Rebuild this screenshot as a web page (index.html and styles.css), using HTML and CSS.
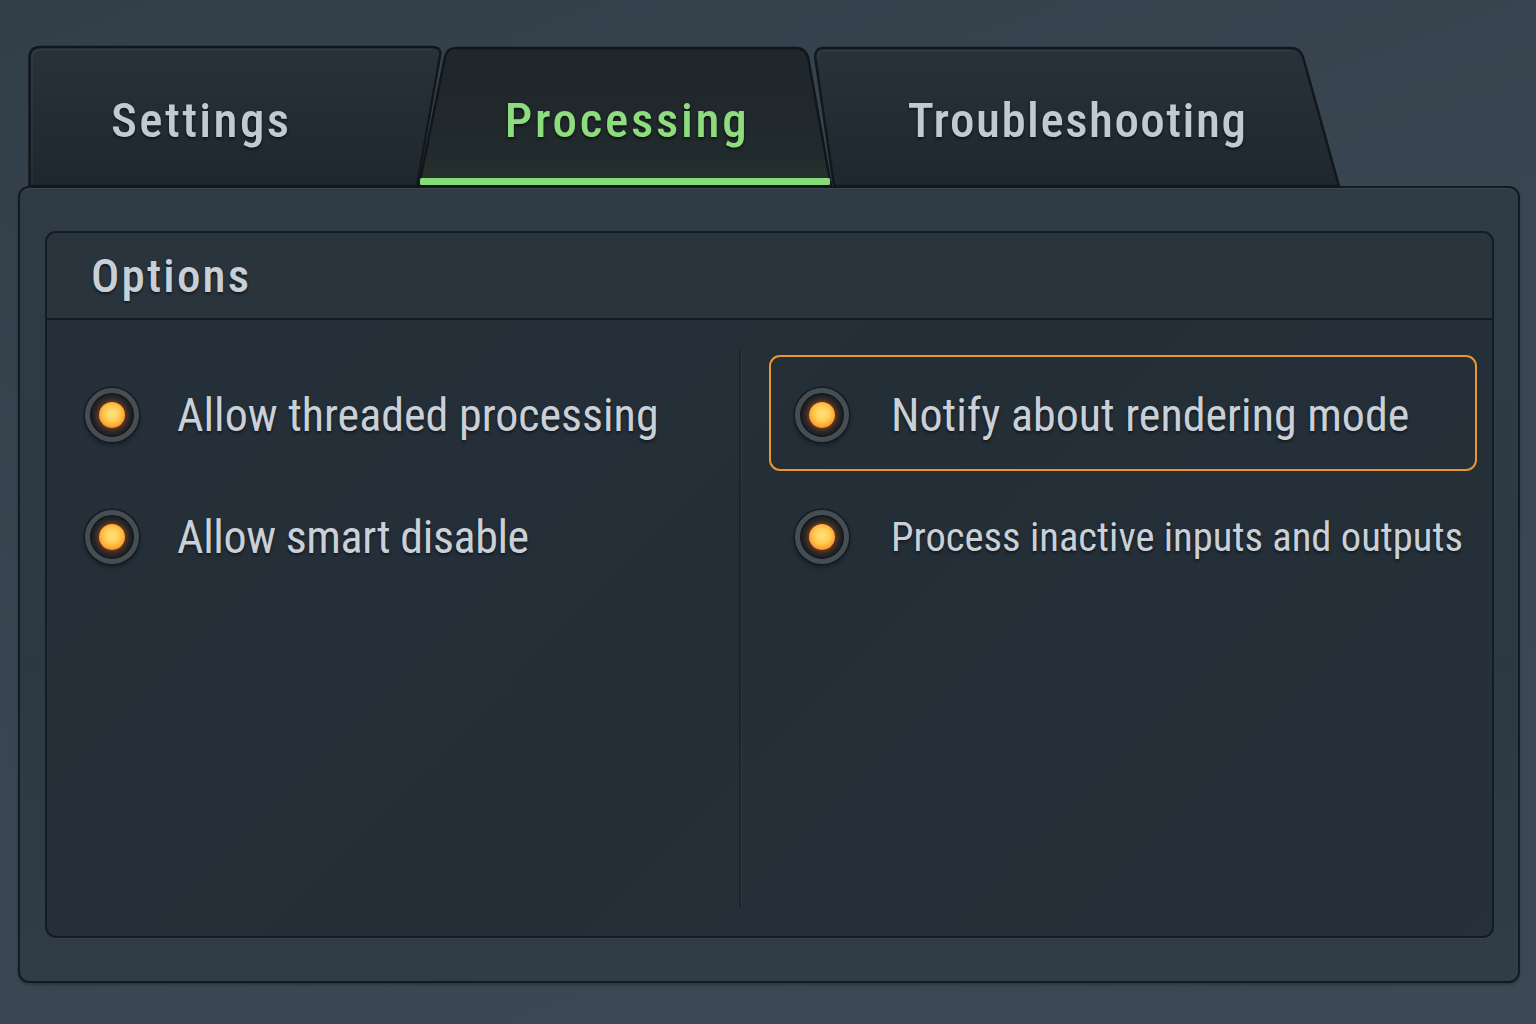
FILE: index.html
```html
<!DOCTYPE html>
<html lang="en">
<head>
<meta charset="utf-8">
<title>Processing options</title>
<link rel="stylesheet" href="styles.css">
</head>
<body>
<div class="page">
  <div class="tabs">
    <div class="tab tab-settings">
      <svg class="tab-shape" width="414" height="141" viewBox="0 0 414 141">
        <defs>
          <linearGradient id="gInactive" x1="0" y1="0" x2="0" y2="1">
            <stop offset="0" stop-color="#28323a"/>
            <stop offset="1" stop-color="#1f272e"/>
          </linearGradient>
        </defs>
        <path d="M1.5,141 L1.5,13 Q1.5,2 12.5,2 L404,2 Q414,2 412,11 L389,141 Z" fill="url(#gInactive)" stroke="#12171c" stroke-width="2.5"/>
        <path d="M4,140 L4,13 Q4,4.5 12.5,4.5 L404,4.5" fill="none" stroke="rgba(255,255,255,0.05)" stroke-width="1.5"/>
      </svg>
      <span class="tab-label">Settings</span>
    </div>
    <div class="tab tab-processing is-active">
      <svg class="tab-shape" width="414" height="141" viewBox="0 0 414 141">
        <defs>
          <linearGradient id="gActive" x1="0" y1="0" x2="0" y2="1">
            <stop offset="0" stop-color="#1f262c"/>
            <stop offset="0.75" stop-color="#212a2c"/>
            <stop offset="1" stop-color="#26322c"/>
          </linearGradient>
        </defs>
        <path d="M1,141 L27,12 Q29,3 38,3 L378,3 Q387,3 390,12 L413,141 Z" fill="url(#gActive)" stroke="#11161a" stroke-width="2.5"/>
        <rect x="2" y="133" width="410" height="7" rx="1.5" fill="#86dc78"/>
      </svg>
      <span class="tab-label">Processing</span>
    </div>
    <div class="tab tab-trouble">
      <svg class="tab-shape" width="527" height="141" viewBox="0 0 527 141">
        <path d="M21,141 L2.5,14 Q1,3 11,3 L478,3 Q487,3 490,12 L526,141 Z" fill="url(#gInactive)" stroke="#12171c" stroke-width="2.5"/>
        <path d="M5,14 Q4,5.5 11,5.5 L478,5.5" fill="none" stroke="rgba(255,255,255,0.05)" stroke-width="1.5"/>
      </svg>
      <span class="tab-label">Troubleshooting</span>
    </div>
  </div>

  <section class="panel">
    <div class="group">
      <header class="group-head">Options</header>
      <div class="group-body">
        <div class="col col-left">
          <div class="option">
            <span class="radio"><span class="dot"></span></span>
            <span class="option-text">Allow threaded processing</span>
          </div>
          <div class="option">
            <span class="radio"><span class="dot"></span></span>
            <span class="option-text option-text-tight">Allow smart disable</span>
          </div>
        </div>
        <div class="divider"></div>
        <div class="col col-right">
          <div class="option is-focused">
            <span class="radio"><span class="dot"></span></span>
            <span class="option-text">Notify about rendering mode</span>
          </div>
          <div class="option">
            <span class="radio"><span class="dot"></span></span>
            <span class="option-text option-text-small">Process inactive inputs and outputs</span>
          </div>
        </div>
      </div>
    </div>
  </section>
</div>
</body>
</html>
```
FILE: styles.css
```css
* { box-sizing: border-box; }

html, body {
  margin: 0;
  height: 100%;
}

body {
  width: 1536px;
  height: 1024px;
  overflow: hidden;
  background: linear-gradient(160deg, #323e48 0%, #394651 45%, #3c4955 100%);
  font-family: "Roboto Condensed", "Roboto", "Open Sans", sans-serif;
  color: #c6cdd5;
}

.page {
  padding: 45px 16px 0 18px;
}

/* ---------- tabs ---------- */
.tabs {
  display: flex;
  height: 141px;
  margin-left: 10px;
}

.tab {
  display: grid;
  height: 141px;
  flex: none;
}

.tab > * {
  grid-area: 1 / 1;
}

.tab-shape {
  display: block;
  overflow: visible;
}

.tab-label {
  align-self: center;
  justify-self: center;
  padding-top: 10px;
  font-size: 49px;
  font-weight: 500;
  letter-spacing: 1.2px;
  line-height: 1;
  color: #c1c9d2;
  text-shadow: 0 2px 3px rgba(0, 0, 0, 0.55);
}

.tab-settings {
  width: 414px;
  z-index: 1;
}

.tab-settings .tab-label {
  justify-self: start;
  padding-left: 83px;
  letter-spacing: 2.4px;
}

.tab-processing {
  width: 414px;
  margin-left: -24px;
  position: relative;
  z-index: 3;
}

.tab-processing .tab-label {
  color: #8ddd7e;
  padding-left: 4px;
  letter-spacing: 2.7px;
}

.tab-trouble {
  width: 527px;
  margin-left: -19px;
  z-index: 1;
}

.tab-trouble .tab-label {
  padding-left: 2px;
  letter-spacing: 1.5px;
}

/* ---------- panel ---------- */
.panel {
  height: 797px;
  border: 2px solid #141a1f;
  border-radius: 11px;
  background: linear-gradient(180deg, #2f3b45 0%, #2d3942 60%, #303c46 100%);
  box-shadow: inset 0 1px 0 rgba(255, 255, 255, 0.06), 0 2px 3px rgba(0, 0, 0, 0.25);
  padding: 43px 24px 43px 25px;
}

.group {
  height: 100%;
  border: 2px solid #151b20;
  border-radius: 11px;
  background: linear-gradient(135deg, #26303a 0%, #242e37 50%, #25303a 100%);
  box-shadow: inset 0 1px 0 rgba(255, 255, 255, 0.05), 0 1px 0 rgba(255, 255, 255, 0.05);
  display: flex;
  flex-direction: column;
  overflow: hidden;
}

.group-head {
  height: 87px;
  flex: none;
  display: flex;
  align-items: center;
  padding-left: 44px;
  border-bottom: 2px solid #161c21;
  background: #29343d;
  font-size: 47px;
  font-weight: 500;
  letter-spacing: 2.2px;
  line-height: 1;
  color: #c8cfd7;
  text-shadow: 0 2px 3px rgba(0, 0, 0, 0.5);
}

.group-body {
  flex: 1;
  display: grid;
  grid-template-columns: 692px 2px 1fr;
  padding: 30px 0 28px;
}

.divider {
  background: #1c242b;
  box-shadow: 1px 0 0 rgba(255, 255, 255, 0.04);
}

.col {
  display: flex;
  flex-direction: column;
  gap: 6px;
  padding-top: 5px;
}

.col-left {
  padding-left: 36px;
}

.col-right {
  padding-left: 28px;
  padding-right: 15px;
}

.option {
  height: 116px;
  display: flex;
  align-items: center;
  gap: 38px;
  border: 2px solid transparent;
  border-radius: 11px;
  padding-top: 4px;
}

.col-right .option {
  padding-left: 24px;
  gap: 42px;
}

.option.is-focused {
  border-color: #e8962f;
}

.option-text {
  font-size: 46px;
  font-weight: 400;
  line-height: 1;
  color: #c9d0d8;
  text-shadow: 0 2px 3px rgba(0, 0, 0, 0.5);
  white-space: nowrap;
}

.option-text-tight {
  letter-spacing: -0.4px;
}

.option-text-small {
  font-size: 40.6px;
}

/* ---------- radio ---------- */
.radio {
  flex: none;
  width: 54px;
  height: 54px;
  border-radius: 50%;
  display: flex;
  align-items: center;
  justify-content: center;
  border: 5px solid #464e55;
  background: radial-gradient(circle, #23292e 0%, #1c2125 70%, #171b1f 100%);
  box-shadow: 0 0 0 1.5px #161b1f, 0 3px 5px rgba(0, 0, 0, 0.45), inset 0 0 0 1.5px #15191c;
}

.dot {
  width: 26px;
  height: 26px;
  border-radius: 50%;
  background: radial-gradient(circle at 50% 45%, #ffe27c 0%, #ffcd55 40%, #ffa330 66%, #f0601a 84%, #d63a0c 100%);
  box-shadow: 0 0 6px 1px rgba(255, 100, 20, 0.55);
}
```
